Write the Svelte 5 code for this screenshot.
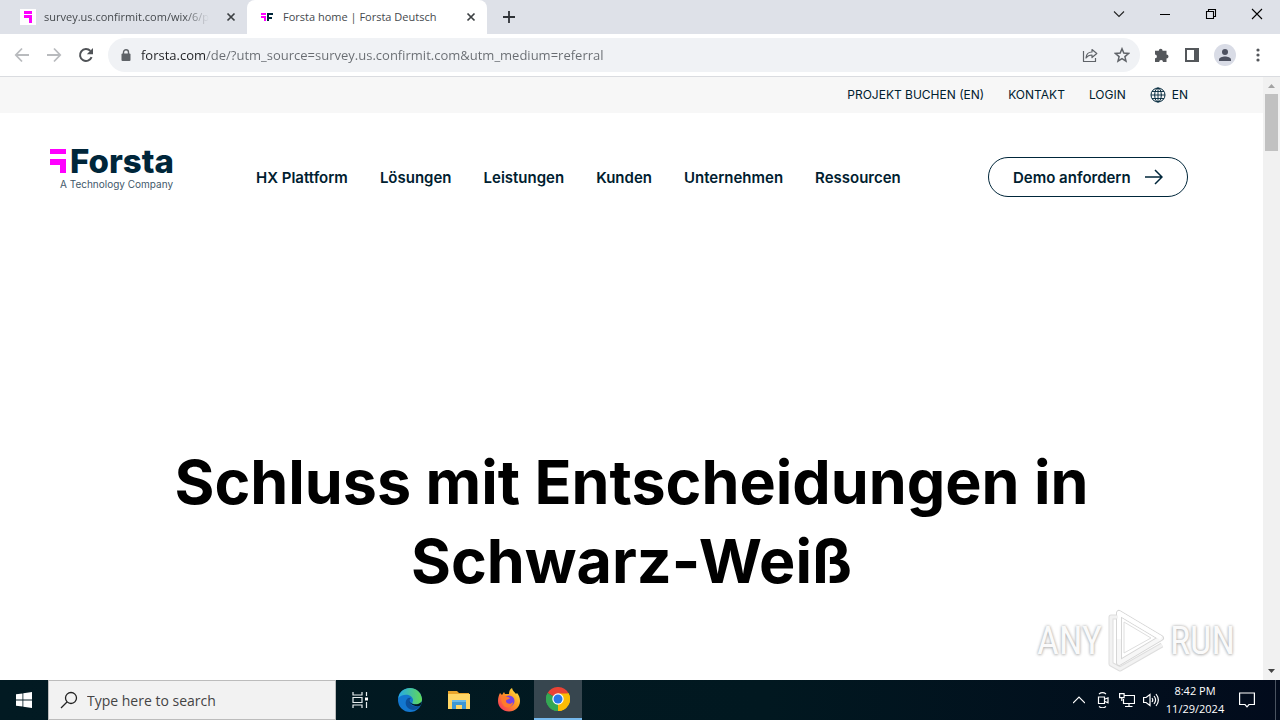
<script>
  const tabs = [
    { title: 'survey.us.confirmit.com/wix/6/p', active: false, icon: 'survey' },
    { title: 'Forsta home | Forsta Deutsch', active: true, icon: 'forsta' }
  ];
  const utility = ['PROJEKT BUCHEN (EN)', 'KONTAKT', 'LOGIN'];
  const nav = ['HX Plattform', 'Lösungen', 'Leistungen', 'Kunden', 'Unternehmen', 'Ressourcen'];
  let url = 'forsta.com/de/?utm_source=survey.us.confirmit.com&utm_medium=referral';
</script>

<div class="screen">
  <header class="tabstrip">
    {#each tabs as tab}
      <div class="tab" class:active={tab.active}>
        <button class="tab-main">
          {#if tab.icon === 'survey'}
            <svg class="i16" viewBox="0 0 16 16"><rect width="16" height="16" fill="#fff" /><path d="M4 2h8v3H4zM4 6h8v8H9V9H4z" fill="#f0f" /></svg>
          {:else}
            <svg class="i16" viewBox="0 0 16 16"><path d="M2 4h5v2H2zM2 7h5v5H5V9H2z" fill="#f0f" /><path d="M8 4h6v2h-4v2h3v2h-3v2H8z" fill="#00263a" /></svg>
          {/if}
          <span class="tab-title">{tab.title}</span>
        </button>
        <button class="close" aria-label="Close tab">
          <svg viewBox="0 0 10 10" width="10" height="10"><path d="M1.500 1.500l7 7M8.500 1.500l-7 7" stroke="#3c4043" stroke-width="1.700" /></svg>
        </button>
      </div>
    {/each}
    <button class="newtab" aria-label="New tab">
      <svg viewBox="0 0 12 12" width="12" height="12"><path d="M6 0v12M0 6h12" stroke="#2f3237" stroke-width="1.800" /></svg>
    </button>
    <div class="window-buttons">
      <button aria-label="Search tabs"><svg viewBox="0 0 12 12" width="12" height="12"><path d="M1 3.500l5 5 5-5" fill="none" stroke="#222" stroke-width="1.100" /></svg></button>
      <button aria-label="Minimize"><svg viewBox="0 0 12 12" width="12" height="12"><path d="M1 6.500h10" stroke="#000" /></svg></button>
      <button aria-label="Restore"><svg viewBox="0 0 12 12" width="12" height="12"><path d="M1.500 3.500h7v7h-7zM3.500 3.500v-2h7v7h-2" fill="none" stroke="#000" stroke-width="1.100" /></svg></button>
      <button aria-label="Close"><svg viewBox="0 0 12 12" width="12" height="12"><path d="M1 1l10 10M11 1L1 11" stroke="#000" stroke-width="1.100" /></svg></button>
    </div>
  </header>

  <div class="toolbar">
    <button aria-label="Back"><svg class="i16" viewBox="0 0 16 16"><path d="M15 8H2M8 1.500L1.800 8 8 14.500" fill="none" stroke="#b9bbbe" stroke-width="1.800" /></svg></button>
    <button aria-label="Forward"><svg class="i16" viewBox="0 0 16 16"><path d="M1 8h13M8 1.500L14.200 8 8 14.500" fill="none" stroke="#b9bbbe" stroke-width="1.800" /></svg></button>
    <button aria-label="Reload"><svg class="i16" viewBox="0 0 16 16"><path d="M13.600 10.200A6 6 0 1 1 12.400 3.900" fill="none" stroke="#505357" stroke-width="2" /><path d="M15 1v6.200H8.800z" fill="#505357" /></svg></button>
    <div class="omnibox">
      <svg class="lock" viewBox="0 0 10 12" width="10" height="12"><path d="M2.500 5V3.300a2.500 2.500 0 0 1 5 0V5" fill="none" stroke="#5f6368" stroke-width="1.400" /><rect x=".5" y="4.500" width="9" height="7.500" rx="1" fill="#5f6368" /></svg>
      <input aria-label="Address and search bar" bind:value={url} />
      <button aria-label="Share"><svg class="i16" viewBox="0 0 16 16"><path d="M1.500 4v10.500h12V11M4 11c.3-4 2.500-6 6-6V2.500l4.800 4-4.800 4V8C7.500 8 5.500 8.800 4 11z" fill="none" stroke="#5f6368" stroke-width="1.200" stroke-linejoin="round" /></svg></button>
      <button aria-label="Bookmark"><svg class="i16" viewBox="0 0 16 16"><path d="M8 1.800l1.800 4.300 4.700.4-3.600 3.100 1.100 4.500-4-2.400-4 2.400 1.100-4.500L1.500 6.500l4.700-.4z" fill="none" stroke="#5f6368" stroke-width="1.500" /></svg></button>
    </div>
    <div class="actions">
      <button aria-label="Extensions"><svg class="i16" viewBox="0 0 16 16"><path d="M1 3.700h3.800a1.900 1.900 0 1 1 3.800 0h3.900v3.700a2 2 0 1 1 0 4V15H9a1.900 1.900 0 0 0-3.800 0H1v-3.700a1.900 1.900 0 0 0 0-3.800z" fill="#54575b" /></svg></button>
      <button aria-label="Side panel"><svg class="i16" viewBox="0 0 16 16"><path d="M1 1h14v14H1zM3 3v10h7V3z" fill="#54575b" fill-rule="evenodd" /></svg></button>
      <button aria-label="Profile"><svg viewBox="0 0 22 22" width="22" height="22"><circle cx="11" cy="11" r="11" fill="#d9dce6" /><circle cx="11" cy="8" r="3" fill="#4d5160" /><path d="M5 17v-1.500c0-2 3.500-3 6-3s6 1 6 3V17z" fill="#4d5160" /></svg></button>
      <button class="menu" aria-label="Menu"><svg class="i16" viewBox="0 0 16 16" fill="#54575b"><circle cx="8" cy="3" r="1.600" /><circle cx="8" cy="8" r="1.600" /><circle cx="8" cy="13" r="1.600" /></svg></button>
    </div>
  </div>

  <div class="viewport">
    <main>
      <div class="utility">
        {#each utility as item}<a href="#top">{item}</a>{/each}
        <a href="#top" class="lang">
          <svg viewBox="0 0 16 16" width="16" height="16" fill="none" stroke="#00263a"><circle cx="8" cy="8" r="7" /><ellipse cx="8" cy="8" rx="3.300" ry="7" /><path d="M8 1v14M1 8h14M2 4.500h12M2 11.500h12" stroke-width=".9" /></svg>EN
        </a>
      </div>
      <div class="site-header">
        <a href="#top" class="logo">
          <span class="wordmark">
            <svg viewBox="0 0 16 24" width="16" height="24"><path d="M0 0h16v5H0zM0 10h16v14h-6v-8H0z" fill="#f0f" /></svg>Forsta
          </span>
          <span class="tagline">A Technology Company</span>
        </a>
        <nav>{#each nav as item}<a href="#top">{item}</a>{/each}</nav>
        <a class="demo" href="#top">Demo anfordern
          <svg viewBox="0 0 18 16" width="18" height="16"><path d="M0 8h17M10 1l7 7-7 7" fill="none" stroke="#00263a" stroke-width="1.500" /></svg>
        </a>
      </div>
      <h1>Schluss mit Entscheidungen in Schwarz-Weiß</h1>
      <div class="watermark">
        <span>ANY</span>
        <svg viewBox="0 0 60 64" width="60" height="64" fill="none" stroke-linejoin="round">
          <path d="M12 8H5v47l9 5 42-24" stroke="#dedede" stroke-width="5" />
          <path d="M13 4v50L55 29z" stroke="#d6d6d6" stroke-width="6" />
          <path d="M13 4v50L55 29z" stroke="#f7f7f7" stroke-width="4" />
          <path d="M13 30V4l42 25" stroke="#fff" stroke-width="4" />
          <path d="M12 8H5v47l9 5 42-24" stroke="#f2f2f2" stroke-width="3" />
          <path d="M18 13v31l27-15z" stroke="#dedede" />
        </svg>
        <span>RUN</span>
      </div>
    </main>
    <div class="scrollbar">
      <svg viewBox="0 0 17 17" width="17" height="17"><path d="M5 11h7L8.500 7z" fill="#a3a3a3" /></svg>
      <div class="thumb"></div>
      <svg class="down" viewBox="0 0 17 17" width="17" height="17"><path d="M5 6h7l-3.500 4z" fill="#444" /></svg>
    </div>
  </div>

  <footer class="taskbar">
    <button class="start" aria-label="Start"><svg class="i16" viewBox="0 0 16 16" fill="#fff"><path d="M0 2.300l6.500-.9v6.200H0zM7.300 1.300L16 0v7.600H7.300zM0 8.400h6.500v6.200L0 13.700zM7.300 8.400H16V16l-8.700-1.300z" /></svg></button>
    <label class="search">
      <svg viewBox="0 0 18 18" width="18" height="18"><circle cx="11" cy="7" r="5.500" fill="none" stroke="#222" stroke-width="1.300" /><path d="M7 11l-6 6" stroke="#222" stroke-width="1.300" /></svg>
      <input placeholder="Type here to search" aria-label="Type here to search" />
    </label>
    <div class="apps">
    <button class="app" aria-label="Task view"><svg viewBox="0 0 18 18" width="18" height="18" fill="none" stroke="#e8eef0" stroke-width="1.200"><path d="M2 1v3h9V1M2 17v-3h9v3M2 6.500h9v5H2zM15.500 1v4M15.500 11v6" /><path d="M14 6.500h3v3h-3z" fill="#fff" stroke="none" /></svg></button>
    <button class="app wide" aria-label="Edge"><svg viewBox="0 0 24 24" width="24" height="24">
      <defs><linearGradient id="e1" x1="0" x2="1"><stop stop-color="#25a9e8" /><stop offset="1" stop-color="#62d957" /></linearGradient></defs>
      <circle cx="12" cy="12" r="12" fill="#1377cf" />
      <path d="M.3 10C2-3 22-4 24 11c.3 5-6 7-9.500 4.500-.8-.8.8-1.700.5-4C14 6 5 5 .3 10z" fill="url(#e1)" />
      <path d="M9 11c-3 4-1 10 6 11 3 0 6-2 7.500-4.500-5 2-10 .500-11-3.500-.3-1.500.3-3 1.500-4-1.500-.5-3 0-4 1z" fill="#0c509c" />
      <path d="M12 10c-1.500 2-.5 5 3 6 3 .8 6 .2 9-2.500l-1.500 4c-3 1.500-8 .5-10.500-2.500-1-1.500-1-3.500 0-5z" fill="#021920" />
    </svg></button>
    <button class="app" aria-label="File Explorer"><svg viewBox="0 0 22 20" width="22" height="20"><path d="M0 1h9l2 2h10v4H0z" fill="#e9a52c" /><path d="M0 4h22v15H0z" fill="#ffd665" /><path d="M4 19v-9h14v9h-4v-4H8v4z" fill="#3d97d3" /><path d="M4 10h14v2H4z" fill="#69b9e8" /></svg></button>
    <button class="app wide" aria-label="Firefox"><svg viewBox="0 0 24 24" width="24" height="24">
      <defs><linearGradient id="f1" x1="1" y1="0" x2="0" y2="1"><stop stop-color="#fff24a" /><stop offset=".45" stop-color="#ff9a1f" /><stop offset="1" stop-color="#f5246a" /></linearGradient></defs>
      <path d="M3 5l2 2 2-3 1 2 4 0c0-3 1-5 3-6 .5 3 3 4 4 6l1-1c2 2 3 5 3 8 0 6-5 10.500-11 10.500S1 19 1 13c0-3 .8-6 2-8z" fill="url(#f1)" />
      <circle cx="12" cy="13" r="5.500" fill="#7542e5" /><path d="M4 9c3-1 5-1 7 0l2 1c-1 2-4 1-4 3 0 3 5 4 7 1 0 5-6 7-9 4-2-2-3-5-3-9z" fill="#ff7b2c" />
    </svg></button>
    <button class="app current" aria-label="Chrome"><svg viewBox="0 0 24 24" width="24" height="24">
      <path d="M12 12L1.600 6A12 12 0 0 1 22.400 6z" fill="#e94335" /><path d="M12 12l10.400-6A12 12 0 0 1 12 24z" fill="#fbbc04" /><path d="M12 12v12A12 12 0 0 1 1.600 6z" fill="#34a853" />
      <path d="M12 6.500h10.700A12 12 0 0 1 12 24l4.800-9.300z" fill="#fbbc04" /><path d="M1.600 6l5.600 8.800L12 18l-.5 6A12 12 0 0 1 1.600 6z" fill="#34a853" />
      <circle cx="12" cy="12" r="5.700" fill="#fff" /><circle cx="12" cy="12" r="4.500" fill="#2878e8" />
    </svg></button>
    </div>
    <div class="tray">
      <svg viewBox="0 0 12 12" width="12" height="12"><path d="M0 9l6-6 6 6" fill="none" stroke="#fff" stroke-width="1.200" /></svg>
      <svg class="i16" viewBox="0 0 16 16" fill="none" stroke="#fff" stroke-width="1.200"><path d="M3.500 5h6v6.500h-6zM9.500 7.300l3.500-1.500v5l-3.500-1.500M4 2c2-1.500 5-1.500 7 0M4 14.500c2 1.500 5 1.500 7 0" /></svg>
      <svg class="i16" viewBox="0 0 16 16" fill="none" stroke="#fff" stroke-width="1.200"><path d="M5.500 3.500h10v8h-11V7M10 11.500v3M6 14.500h7.500M.6 1.600h4.500v4H.6zM2.800 5.600V9" /></svg>
      <svg class="i16" viewBox="0 0 16 16" fill="none" stroke="#fff" stroke-width="1.200"><path d="M.6 5.500h2.500L7 2.500v11l-3.900-3H.6zM9 6c1 1.300 1 2.700 0 4M11 4c2 2.500 2 5.500 0 8M13 2c3 3.800 3 8.200 0 12" /></svg>
    </div>
    <div class="clock"><span>8:42 PM</span><span>11/29/2024</span></div>
    <button class="notify" aria-label="Notifications"><svg class="i16" viewBox="0 0 16 16"><path d="M.6 1h14.800v11.500H10l-2 2.300-2-2.300H.6z" fill="none" stroke="#fff" stroke-width="1.200" /></svg></button>
    <div class="show-desktop"></div>
  </footer>
</div>

<style>
  :global(body) { margin: 0; }
  * { box-sizing: border-box; }
  svg { display: block; flex: none; }
  button { border: 0; background: none; padding: 0; margin: 0; font: inherit; color: inherit; display: flex; align-items: center; justify-content: center; }
  a { color: inherit; text-decoration: none; }
  input { border: 0; background: none; outline: 0; padding: 0; font: inherit; min-width: 0; }
  .i16 { width: 16px; height: 16px; }
  .screen { min-height: 100vh; display: flex; flex-direction: column; font-family: "Open Sans", "Noto Sans", sans-serif; background: #fff; }

  .tabstrip { display: flex; height: 34px; background: #dee1e8; }
  .tab { display: flex; align-items: center; width: 240px; padding: 0 10px 0 12px; }
  .tab:first-child { width: 247px; padding-left: 20px; }
  .tab.active { background: #fff; border-radius: 8px 8px 0 0; }
  .tab-main { flex: 1; min-width: 0; gap: 8px; justify-content: flex-start; }
  .tab-title { font-size: 11px; line-height: 16px; white-space: nowrap; color: #45494d; }
  .tab:first-child .tab-title { mask-image: linear-gradient(to right, #000 85%, transparent); }
  .close { width: 12px; height: 16px; margin-left: 10px; }
  .newtab { width: 44px; }
  .window-buttons { margin-left: auto; display: flex; height: 28px; }
  .window-buttons button { width: 46px; }

  .toolbar { display: flex; align-items: center; height: 43px; padding: 0 14px; gap: 16px; border-bottom: 1px solid #dadce0; }
  .omnibox { flex: 1; display: flex; align-items: center; gap: 16px; height: 34px; margin-left: -2px; padding: 0 10px 0 13px; border-radius: 17px; background: #f0f2f5; }
  .omnibox input { flex: 1; height: 24px; margin-left: -6px; font-size: 13px; color: transparent; background: linear-gradient(to right, #202124 64px, #686c71 64px); background-clip: text; -webkit-background-clip: text; }
  .actions { display: flex; align-items: center; gap: 14px; margin: 0 0 0 -2px; }

  .viewport { flex: 1; display: flex; }
  main { flex: 1; position: relative; min-width: 0; font-family: Inter, sans-serif; color: #00202f; }
  .utility { display: flex; justify-content: flex-end; align-items: center; gap: 24px; height: 36px; padding: 0 75px 1px 0; background: #f7f7f7; font-size: 12px; }
  .lang { display: flex; align-items: center; gap: 6px; }
  .site-header { display: flex; align-items: flex-start; padding: 36px 75px 0 50px; }
  .logo { width: 206px; display: flex; flex-direction: column; }
  .wordmark { display: flex; gap: 4px; align-items: center; font-size: 33px; line-height: 24px; font-weight: 800; color: #00263a; }
  .tagline { font-size: 10px; line-height: 14px; margin-top: 4px; padding-left: 10px; color: #42586a; }
  nav { display: flex; gap: 32px; padding-top: 18px; font-size: 15px; line-height: 22px; font-weight: 600; }
  .demo { margin: 8px 0 0 auto; min-width: 200px; height: 40px; padding: 0 24px; display: flex; align-items: center; justify-content: space-between; gap: 12px; border: 1px solid #00263a; border-radius: 20px; font-size: 15px; font-weight: 600; white-space: nowrap; }
  h1 { max-width: 960px; margin: 246px auto 0; font-size: 61px; line-height: 79px; font-weight: 700; text-align: center; color: #000; }
  .watermark { position: absolute; right: 28px; bottom: 7px; display: flex; align-items: center; gap: 4px; font-family: "Roboto Condensed", "Liberation Sans Narrow", Roboto, sans-serif; font-size: 38px; line-height: 40px; color: #fafafa; text-shadow: 0 0 3px #aaa, 0 1px 3px #ccc; }
  .scrollbar { width: 17px; background: #f1f1f1; display: flex; flex-direction: column; }
  .thumb { height: 57px; margin: 0 2px; background: #c1c1c1; }
  .down { margin-top: auto; }

  .taskbar { display: flex; height: 40px; background: linear-gradient(to right, #021a22, #011820 60%, #020b1c); color: #fff; }
  .start { width: 48px; }
  .search { width: 288px; display: flex; align-items: center; gap: 9px; padding-left: 11px; background: #f2f2f2; border: 1px solid #bcbcbc; }
  .search input { flex: 1; font-size: 14px; }
  .search input::placeholder { color: #444; opacity: 1; }
  .apps { display: flex; }
  .app { width: 48px; }
  .app.wide { width: 51px; }
  .app.current { background: #37464f; border-bottom: 2px solid #76b9ed; }
  .tray { margin-left: auto; display: flex; align-items: center; gap: 8px; }
  .tray svg:first-child { margin-right: 2px; }
  .clock { display: flex; flex-direction: column; align-items: center; justify-content: center; width: 72px; font-size: 11px; line-height: 18px; }
  .notify { width: 32px; }
  .show-desktop { width: 5px; margin-left: 12px; border-left: 1px solid #4a5360; }
</style>
